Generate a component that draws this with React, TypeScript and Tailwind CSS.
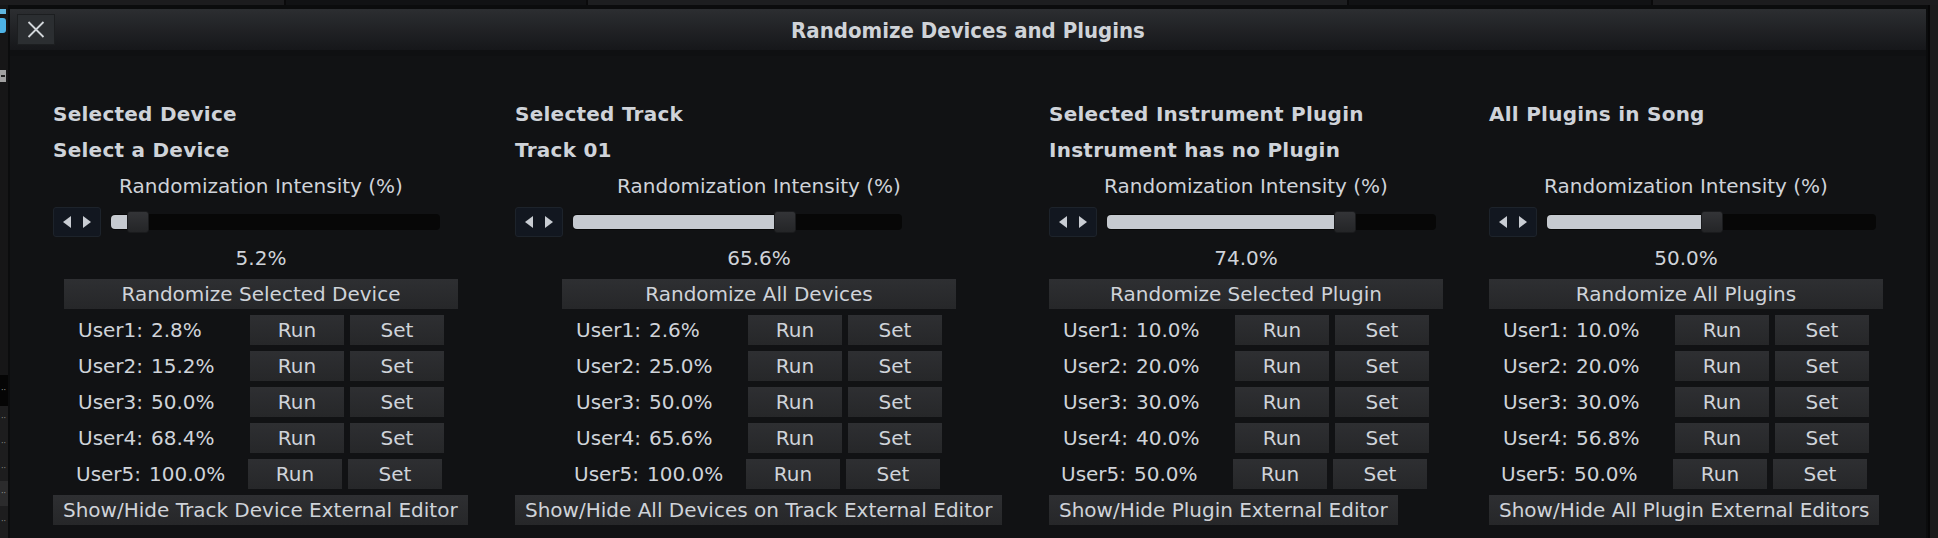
import React from "react";

type Col = {
  width: number;
  title: string;
  sub: string;
  pct: number;
  action: string;
  users: string[];
  editor: string;
};

const cols: Col[] = [
  {
    width: 416,
    title: "Selected Device",
    sub: "Select a Device",
    pct: 5.2,
    action: "Randomize Selected Device",
    users: ["2.8%", "15.2%", "50.0%", "68.4%", "100.0%"],
    editor: "Show/Hide Track Device External Editor",
  },
  {
    width: 488,
    title: "Selected Track",
    sub: "Track 01",
    pct: 65.6,
    action: "Randomize All Devices",
    users: ["2.6%", "25.0%", "50.0%", "65.6%", "100.0%"],
    editor: "Show/Hide All Devices on Track External Editor",
  },
  {
    width: 394,
    title: "Selected Instrument Plugin",
    sub: "Instrument has no Plugin",
    pct: 74.0,
    action: "Randomize Selected Plugin",
    users: ["10.0%", "20.0%", "30.0%", "40.0%", "50.0%"],
    editor: "Show/Hide Plugin External Editor",
  },
  {
    width: 394,
    title: "All Plugins in Song",
    sub: "",
    pct: 50.0,
    action: "Randomize All Plugins",
    users: ["10.0%", "20.0%", "30.0%", "56.8%", "50.0%"],
    editor: "Show/Hide All Plugin External Editors",
  },
];

const btn =
  "h-[30px] flex items-center justify-center bg-gradient-to-b from-[#2e2f32] to-[#262729] text-[#cfd3d9] whitespace-nowrap";

function Slider({ pct }: { pct: number }) {
  const trackW = 329;
  const thumbW = 22;
  const x = Math.max(14, (pct / 100) * (trackW - thumbW));
  return (
    <div className="h-[30px] flex items-center gap-[10px]">
      <div className="w-[48px] h-[30px] rounded-[3px] bg-[#121720] border border-[#1d232b] flex items-center justify-center">
        <svg width="30" height="14" viewBox="0 0 30 14">
          <polygon points="1,7 9,1 9,13" fill="#c9cdd3" />
          <polygon points="29,7 21,1 21,13" fill="#c9cdd3" />
        </svg>
      </div>
      <div className="relative w-[329px] h-[16px] rounded-[4px] bg-[#070707]">
        <div
          className="absolute left-0 top-[1px] bottom-[1px] rounded-l-[4px] bg-[#c6cad0]"
          style={{ width: x + thumbW / 2 }}
        />
        <div
          className="absolute top-[-3px] w-[22px] h-[22px] rounded-[3px] bg-gradient-to-b from-[#333437] to-[#242527] border border-[#1a1b1d]"
          style={{ left: x }}
        />
      </div>
    </div>
  );
}

function Column({ c }: { c: Col }) {
  return (
    <div className="flex flex-col gap-[6px]" style={{ width: c.width }}>
      <div className="h-[30px] flex items-center font-bold tracking-[0.25px] text-[#cfd3d9] whitespace-nowrap">
        {c.title}
      </div>
      <div className="h-[30px] flex items-center font-bold tracking-[0.25px] text-[#cfd3d9] whitespace-nowrap">
        {c.sub}
      </div>
      <div className="h-[30px] flex items-center justify-center whitespace-nowrap">
        Randomization Intensity (%)
      </div>
      <Slider pct={c.pct} />
      <div className="h-[30px] flex items-center justify-center">
        {c.pct.toFixed(1)}%
      </div>
      <div className="flex justify-center">
        <div className={btn + " w-[394px]"}>{c.action}</div>
      </div>
      {c.users.map((u, i) => (
        <div key={i} className="flex justify-center">
          <div
            className={
              "w-[366px] h-[30px] flex items-center" + (i === 4 ? " -ml-[4px]" : "")
            }
          >
            <div className="w-[172px] flex items-center whitespace-nowrap">
              <span className="w-[73px]">User{i + 1}:</span>
              <span>{u}</span>
            </div>
            <div className={btn + " w-[94px]"}>Run</div>
            <div className={btn + " w-[94px] ml-[6px]"}>Set</div>
          </div>
        </div>
      ))}
      <div className="flex">
        <div className={btn + " px-[10px]"}>{c.editor}</div>
      </div>
    </div>
  );
}

export default function App() {
  return (
    <div
      className="w-[1938px] h-[538px] bg-[#1c1c1d] overflow-hidden flex flex-col text-[20px] text-[#cfd3d9]"
      style={{ fontFamily: '"DejaVu Sans", "Liberation Sans", sans-serif' }}
    >
      {/* top strip */}
      <div className="h-[5px] flex shrink-0">
        <div className="w-[284px] bg-[#1c1c1e]" />
        <div className="w-[2px] bg-[#0a0a0b]" />
        <div className="w-[300px] bg-[#111214]" />
        <div className="w-[2px] bg-[#0a0a0b]" />
        <div className="w-[759px] bg-[#1d1e20]" />
        <div className="w-[2px] bg-[#0a0a0b]" />
        <div className="w-[302px] bg-[#111214]" />
        <div className="w-[2px] bg-[#0a0a0b]" />
        <div className="flex-1 bg-[#1c1c1e]" />
      </div>
      <div className="flex flex-1 min-h-0">
        {/* left strip */}
        <div className="w-[8px] shrink-0 flex flex-col bg-[#161617]">
          <div className="h-[4px]" />
          <div className="h-[5px] w-[6px] bg-[#5fb6e0]" />
          <div className="h-[4px]" />
          <div className="h-[15px] w-[6px] rounded-r-[3px] bg-[#4db3e6]" />
          <div className="h-[37px]" />
          <div className="h-[12px] w-[6px] bg-[#a0a0a0] flex items-center justify-center">
            <div className="w-[4px] h-[2px] bg-[#202020]" />
          </div>
          <div className="h-[293px]" />
          <div className="h-[31px] bg-[#050505] flex items-center pl-[1px]">
            <span className="text-[8px] leading-none text-[#9a9a9a]">··</span>
          </div>
          <div className="h-[25px] bg-[#1d1d1e] flex items-center pl-[1px]">
            <span className="text-[8px] leading-none text-[#8a8a8a]">··</span>
          </div>
          <div className="h-[25px] bg-[#1d1d1e] flex items-center pl-[1px]">
            <span className="text-[8px] leading-none text-[#8a8a8a]">··</span>
          </div>
          <div className="h-[25px] bg-[#1d1d1e] flex items-center pl-[1px]">
            <span className="text-[8px] leading-none text-[#8a8a8a]">··</span>
          </div>
          <div className="h-[25px] bg-[#2b2b2c] flex items-center pl-[1px]">
            <span className="text-[8px] leading-none text-[#9a9a9a]">··</span>
          </div>
          <div className="flex-1 bg-[#1d1d1e] flex items-center pl-[1px]">
            <span className="text-[8px] leading-none text-[#8a8a8a]">··</span>
          </div>
        </div>
        {/* dialog */}
        <div className="w-[1920px] shrink-0 bg-[#0b0c0d] pt-[4px] px-[2px] flex flex-col">
          <div className="h-[41px] shrink-0 bg-gradient-to-b from-[#2c2e31] to-[#16171a] relative flex items-center justify-center">
            <div className="absolute left-[7px] top-[5px] w-[38px] h-[31px] bg-[#2b2e31] border border-[#1c1e20] flex items-center justify-center">
              <svg width="18" height="17" viewBox="0 0 18 17">
                <path d="M1.5 1 L16.5 16 M16.5 1 L1.5 16" stroke="#d2d6da" strokeWidth="1.8" />
              </svg>
            </div>
            <span
              className="font-bold text-[22px] leading-none text-[#cfd3d8] mt-[3px]"
              style={{ fontFamily: '"DejaVu Sans Condensed", "DejaVu Sans", sans-serif', fontStretch: "condensed" }}
            >
              Randomize Devices and Plugins
            </span>
          </div>
          <div className="h-[6px] shrink-0 bg-[#0f1012]" />
          <div className="flex-1 bg-[#111214] pt-[43px] pl-[43px] flex gap-[46px]">
            {cols.map((c, i) => (
              <Column key={i} c={c} />
            ))}
          </div>
        </div>
        <div className="flex-1 bg-[#1b1b1c] border-l-[2px] border-[#060607]" />
      </div>
    </div>
  );
}
